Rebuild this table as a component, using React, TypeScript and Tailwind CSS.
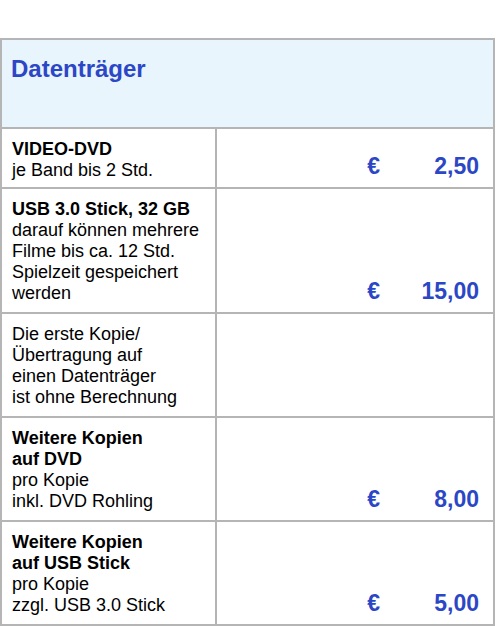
const rows = [
  { bold: ["VIDEO-DVD"], text: ["je Band bis 2 Std."], price: "2,50", pad: "pt-[10px] pb-[6px]" },
  {
    bold: ["USB 3.0 Stick, 32 GB"],
    text: ["darauf können mehrere", "Filme bis ca. 12 Std.", "Spielzeit gespeichert", "werden"],
    price: "15,00",
    pad: "pt-[10px] pb-[8px]",
  },
  {
    bold: [],
    text: ["Die erste Kopie/", "Übertragung auf", "einen Datenträger", "ist ohne Berechnung"],
    price: null,
    pad: "pt-[10px] pb-[8px]",
  },
  {
    bold: ["Weitere Kopien", "auf DVD"],
    text: ["pro Kopie", "inkl. DVD Rohling"],
    price: "8,00",
    pad: "pt-[10px] pb-[8px]",
  },
  {
    bold: ["Weitere Kopien", "auf USB Stick"],
    text: ["pro Kopie", "zzgl. USB 3.0 Stick"],
    price: "5,00",
    pad: "pt-[10px] pb-[8px]",
  },
];

export default function App() {
  return (
    <div className="min-h-[626px] bg-white pt-[38px] font-['Liberation_Sans',Arial,sans-serif]">
      <div className="w-[495px] border-2 border-b-0 border-[#b5b5b5]">
        <div className="h-[89px] border-b-2 border-[#b5b5b5] bg-[#e9f5fc] px-[9px] pt-[15px]">
          <h2 className="text-[24px] font-bold leading-[28px] text-[#2c47c6]">Datenträger</h2>
        </div>
        {rows.map((r, i) => (
          <div key={i} className="flex border-b-2 border-[#b5b5b5]">
            <div
              className={`w-[215px] shrink-0 border-r-2 border-[#b5b5b5] pl-[10px] text-[18px] leading-[21px] text-black ${r.pad}`}
            >
              {r.bold.map((l) => (
                <div key={l} className="font-bold">{l}</div>
              ))}
              {r.text.map((l) => (
                <div key={l}>{l}</div>
              ))}
            </div>
            <div className="flex flex-1 items-end justify-end pb-[8px] pr-[14px]">
              {r.price && (
                <div className="flex text-[23px] font-bold leading-[26px] text-[#2c47c6]">
                  <span>€</span>
                  <span className="w-[99px] text-right">{r.price}</span>
                </div>
              )}
            </div>
          </div>
        ))}
      </div>
    </div>
  );
}
